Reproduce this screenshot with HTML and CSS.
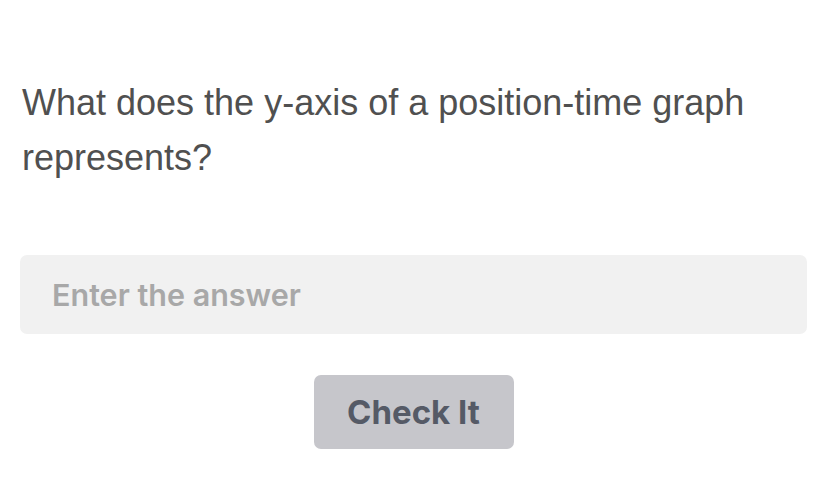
FILE: index.html
```html
<!DOCTYPE html>
<html>
<head>
<meta charset="utf-8">
<link rel="stylesheet" href="styles.css">
</head>
<body>
<main class="quiz">
  <p class="question">What does the y-axis of a position-time graph represents?</p>
  <input class="answer" type="text" placeholder="Enter the answer">
  <div class="actions">
    <button class="check" type="button">Check It</button>
  </div>
</main>
</body>
</html>
```
FILE: styles.css
```css
html, body {
  margin: 0;
  padding: 0;
  background: #ffffff;
}
.quiz {
  display: flex;
  flex-direction: column;
  padding: 75px 17px 0 20px;
}
.question {
  margin: 0 0 0 2px;
  font-family: "Liberation Sans", Arial, sans-serif;
  font-size: 36px;
  line-height: 55px;
  color: #505050;
}
.answer {
  margin-top: 70px;
  height: 79px;
  box-sizing: border-box;
  border: none;
  border-radius: 7px;
  background: #f1f1f1;
  padding: 0 32px;
  font-family: Inter, "Liberation Sans", sans-serif;
  font-size: 30.5px;
  font-weight: 600;
  color: #333;
  outline: none;
}
.answer::placeholder {
  color: #a8a8a8;
}
.actions {
  display: flex;
  justify-content: center;
  margin-top: 41px;
}
.check {
  width: 200px;
  height: 74px;
  border: none;
  border-radius: 7px;
  background: #c6c6cb;
  color: #555a66;
  font-family: Inter, "Liberation Sans", sans-serif;
  font-size: 33px;
  font-weight: 700;
}
```
